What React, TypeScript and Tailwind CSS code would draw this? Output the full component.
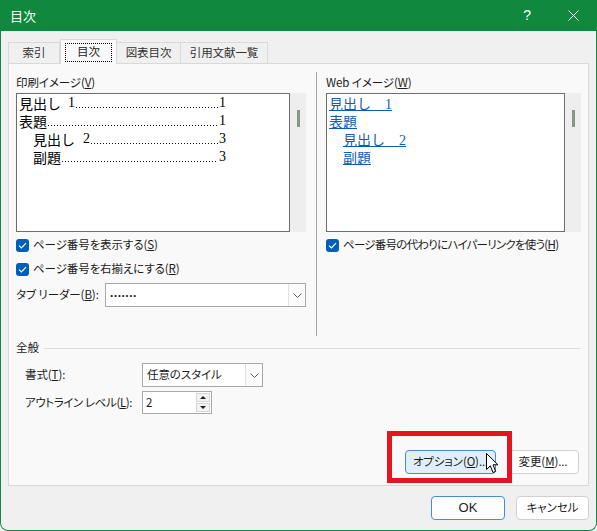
import React from "react";

function Check() {
  return (
    <div className="w-[13px] h-[13px] rounded-[3px] bg-[#005fb8] flex items-center justify-center shrink-0">
      <svg width="9" height="7" viewBox="0 0 9 7">
        <path d="M1 3.6 L3.4 6 L8 1.2" stroke="white" strokeWidth="1.2" fill="none" />
      </svg>
    </div>
  );
}

function Chevron() {
  return (
    <svg width="9" height="5" viewBox="0 0 9 5">
      <path d="M0.5 0.5 L4.5 4.5 L8.5 0.5" stroke="#5a5a5a" strokeWidth="1" fill="none" />
    </svg>
  );
}

function Dots() {
  return (
    <div className="flex-1 self-end mb-[4px] mx-[1px] h-px bg-[linear-gradient(to_right,#111_1px,transparent_1px)] bg-[length:3px_1px] bg-repeat-x" />
  );
}

function Scroll() {
  return (
    <div className="w-[16px] h-full bg-[#eeeeee] flex flex-col items-center pt-[17px]">
      <div className="w-[3px] h-[17px] bg-[#869886]" />
    </div>
  );
}

export default function App() {
  return (
    <div className="relative w-[597px] h-[531px] bg-[#f0f0f0] border-x border-b border-[#10893e] rounded-b-[8px] overflow-hidden font-['Noto_Sans_CJK_JP',sans-serif] text-[11.5px] tracking-[-0.1px] text-[#1b1b1b] [font-feature-settings:'palt'] whitespace-nowrap">
      {/* Title bar */}
      <div className="h-[31px] bg-[#10893e] flex items-center text-white">
        <span className="ml-[9px] text-[13px] leading-none tracking-normal">目次</span>
        <div className="ml-auto w-[46px] h-full flex items-center justify-center text-[14px] font-['Liberation_Sans',sans-serif]">?</div>
        <div className="w-[46px] h-full flex items-center justify-center">
          <svg width="11" height="11" viewBox="0 0 11 11">
            <path d="M0.5 0.5 L10.5 10.5 M10.5 0.5 L0.5 10.5" stroke="white" strokeWidth="1" />
          </svg>
        </div>
      </div>

      {/* Tabs */}
      <div className="pt-[8px] pl-[7px] flex items-end h-[32px] relative z-10">
        <div className="w-[52px] h-[21px] border border-b-0 border-[#d9d9d9] bg-[#f0f0f0] flex items-center justify-center text-[#333]">索引</div>
        <div className="w-[57px] h-[25px] border border-b-0 border-[#d9d9d9] bg-[#f9f9f9] flex items-center justify-center translate-y-[1px]">
          <div className="w-[47px] h-[19px] border border-dotted border-black flex items-center justify-center">目次</div>
        </div>
        <div className="w-[64px] h-[21px] border border-b-0 border-l-0 border-[#d9d9d9] bg-[#f0f0f0] flex items-center justify-center text-[#333]">図表目次</div>
        <div className="w-[87px] h-[21px] border border-b-0 border-l-0 border-[#d9d9d9] bg-[#f0f0f0] flex items-center justify-center text-[#333]">引用文献一覧</div>
      </div>

      {/* Panel */}
      <div className="ml-[7px] w-[581px] h-[423px] border border-[#d9d9d9] bg-[#f9f9f9] flex flex-col">
        <div className="mt-[8px] pl-[7px] flex h-[264px]">
          {/* Left column */}
          <div className="w-[290px] flex flex-col">
            <div className="mt-[2px] h-[18px] flex items-center">
              印刷イメージ(<span className="underline">V</span>)
            </div>
            <div className="mt-[1px] h-[139px] flex">
              <div className="w-[274px] h-full border border-[#6e6e6e] bg-white pl-[2px] text-[14px] leading-[18px] tracking-normal text-black [font-feature-settings:normal]">
                <div className="w-[207px] h-[18px] flex">
                  <span>見出し</span>
                  <span className="ml-[7px] font-['Liberation_Serif',serif]">1</span>
                  <Dots />
                  <span className="font-['Liberation_Serif',serif]">1</span>
                </div>
                <div className="w-[207px] h-[18px] flex">
                  <span>表題</span>
                  <Dots />
                  <span className="font-['Liberation_Serif',serif]">1</span>
                </div>
                <div className="w-[207px] h-[18px] flex pl-[14px]">
                  <span>見出し</span>
                  <span className="ml-[8px] font-['Liberation_Serif',serif]">2</span>
                  <Dots />
                  <span className="font-['Liberation_Serif',serif]">3</span>
                </div>
                <div className="w-[207px] h-[18px] flex pl-[14px]">
                  <span>副題</span>
                  <Dots />
                  <span className="font-['Liberation_Serif',serif]">3</span>
                </div>
              </div>
              <Scroll />
            </div>
            <div className="mt-[3px] h-[20px] flex items-center gap-[4px]">
              <Check />
              <span>ページ番号を表示する(<span className="underline">S</span>)</span>
            </div>
            <div className="mt-[4px] h-[20px] flex items-center gap-[4px]">
              <Check />
              <span>ページ番号を右揃えにする(<span className="underline">R</span>)</span>
            </div>
            <div className="mt-[4px] h-[24px] flex items-center">
              <span className="w-[89px]">タブ&nbsp;リーダー(<span className="underline">B</span>):</span>
              <div className="w-[201px] h-[24px] border border-[#a8a8a8] bg-white flex items-center">
                <span className="flex-1 pl-[4px] font-['Liberation_Sans',sans-serif] text-[12px] font-bold tracking-[0.5px] leading-none pb-[5px]">.......</span>
                <div className="w-[17px] h-full border-l border-[#e2e2e2] bg-[#fbfbfb] flex items-center justify-center">
                  <Chevron />
                </div>
              </div>
            </div>
          </div>

          {/* Separator */}
          <div className="ml-[10px] w-px bg-[#a3a3a3]" />

          {/* Right column */}
          <div className="ml-[9px] w-[256px] flex flex-col">
            <div className="mt-[2px] h-[18px] flex items-center">
              Web イメージ(<span className="underline">W</span>)
            </div>
            <div className="mt-[1px] h-[139px] flex">
              <div className="w-[239px] h-full border border-[#6e6e6e] bg-white pl-[2px] text-[14px] leading-[18px] tracking-normal text-[#0b5cb8] [font-feature-settings:normal]">
                <div className="h-[18px]"><span className="underline">見出し　<span className="font-['Liberation_Serif',serif]">1</span></span></div>
                <div className="h-[18px]"><span className="underline">表題</span></div>
                <div className="h-[18px] pl-[14px]"><span className="underline">見出し　<span className="font-['Liberation_Serif',serif]">2</span></span></div>
                <div className="h-[18px] pl-[14px]"><span className="underline">副題</span></div>
              </div>
              <Scroll />
            </div>
            <div className="mt-[3px] h-[20px] flex items-center gap-[4px]">
              <Check />
              <span className="tracking-[-0.75px]">ページ番号の代わりにハイパーリンクを使う(<span className="underline">H</span>)</span>
            </div>
          </div>
        </div>

        {/* 全般 */}
        <div className="mt-[4px] h-[16px] pl-[7px] pr-[8px] flex items-center">
          <span>全般</span>
          <div className="ml-[5px] flex-1 h-px bg-[#dedede]" />
        </div>

        <div className="mt-[7px] h-[24px] pl-[16px] flex items-center">
          <span className="w-[117px]">書式(<span className="underline">T</span>):</span>
          <div className="w-[121px] h-[24px] border border-[#a8a8a8] bg-white flex items-center">
            <span className="flex-1 pl-[4px]">任意のスタイル</span>
            <div className="w-[17px] h-full border-l border-[#e2e2e2] bg-[#fbfbfb] flex items-center justify-center">
              <Chevron />
            </div>
          </div>
        </div>

        <div className="mt-[4px] h-[23px] pl-[16px] flex items-center">
          <span className="w-[117px] tracking-[-0.4px]">アウトライン&nbsp;レベル(<span className="underline">L</span>):</span>
          <div className="w-[70px] h-[23px] border border-[#a8a8a8] bg-white flex items-center">
            <span className="flex-1 pl-[3px]">2</span>
            <div className="w-[16px] h-full flex flex-col gap-px p-px">
              <div className="flex-1 bg-[#f3f3f3] border border-[#d6d6d6] flex items-center justify-center">
                <svg width="6" height="3" viewBox="0 0 6 3"><path d="M0 3 L3 0 L6 3 Z" fill="#1b1b1b" /></svg>
              </div>
              <div className="flex-1 bg-[#f3f3f3] border border-[#d6d6d6] flex items-center justify-center">
                <svg width="6" height="3" viewBox="0 0 6 3"><path d="M0 0 L3 3 L6 0 Z" fill="#1b1b1b" /></svg>
              </div>
            </div>
          </div>
        </div>

        <div className="mt-[36px] h-[24px] pr-[9px] flex justify-end gap-[11px]">
          <div className="w-[91px] h-[24px] rounded-[4px] border border-[#4a8ad4] bg-[#e0eef9] flex items-center justify-center">
            オプション(<span className="underline">O</span>)...
          </div>
          <div className="w-[72px] h-[24px] rounded-[4px] border border-[#d0d0d0] bg-white flex items-center justify-center">
            変更(<span className="underline">M</span>)...
          </div>
        </div>
      </div>

      {/* Bottom buttons */}
      <div className="mt-[10px] pr-[7px] flex justify-end gap-[11px]">
        <div className="w-[74px] h-[24px] rounded-[4px] border border-[#4a8ad4] bg-white flex items-center justify-center font-['Liberation_Sans',sans-serif] text-[13px] tracking-normal">
          OK
        </div>
        <div className="w-[73px] h-[24px] rounded-[4px] border border-[#d0d0d0] bg-white flex items-center justify-center">
          キャンセル
        </div>
      </div>

      {/* Red highlight */}
      <div className="absolute left-[386px] top-[431px] w-[125px] h-[52px] border-[5px] border-[#e3161f]" />

      {/* Cursor */}
      <svg className="absolute left-[485px] top-[453px]" width="14" height="21" viewBox="0 0 14 21">
        <path d="M0.5 0.5 L0.5 16.5 L4.3 12.8 L7 19.5 L9.6 18.4 L7 11.8 L12 11.8 Z" fill="white" stroke="black" strokeWidth="1" strokeLinejoin="round" />
      </svg>
    </div>
  );
}
